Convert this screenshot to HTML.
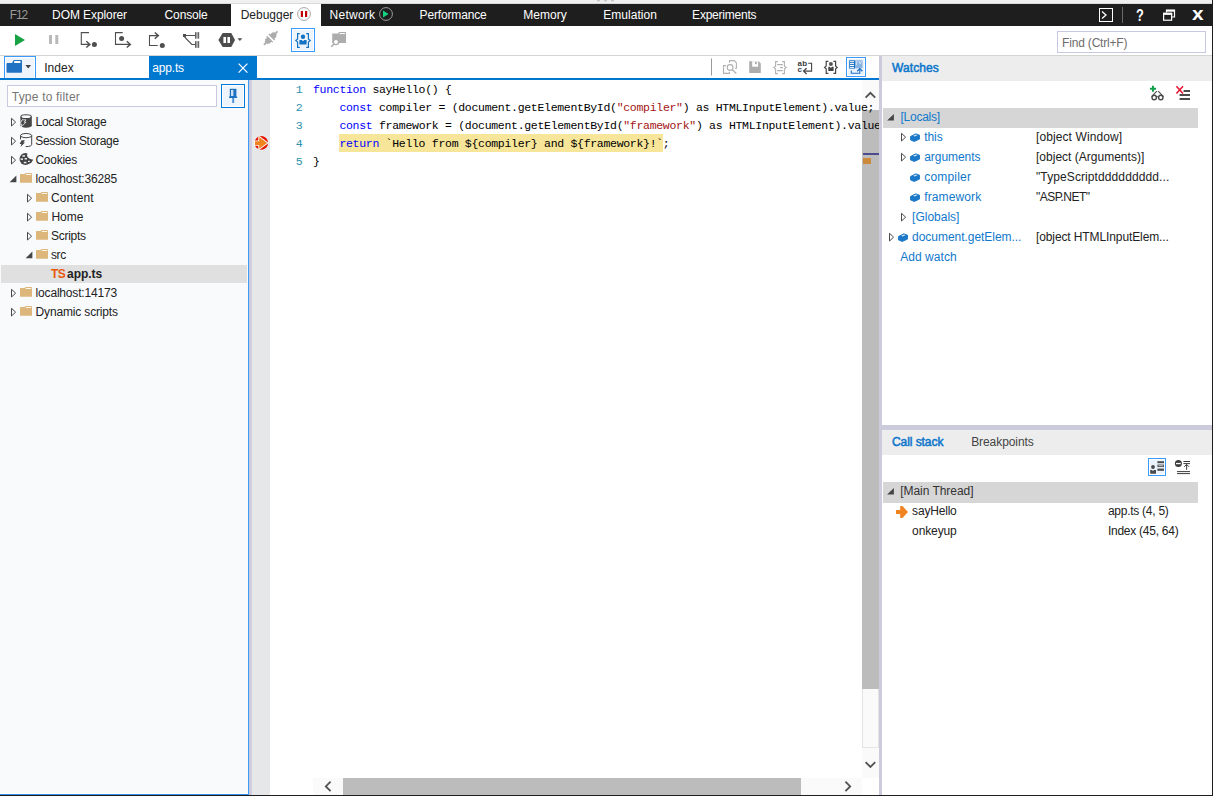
<!DOCTYPE html>
<html>
<head>
<meta charset="utf-8">
<title>F12 Debugger</title>
<style>
*{box-sizing:border-box;margin:0;padding:0}
html,body{width:1215px;height:796px;overflow:hidden;background:#fff}
body{position:relative;font-family:"Liberation Sans",sans-serif;font-size:12px;color:#222}
.a{position:absolute}
.t{position:absolute;white-space:pre;line-height:19px;height:19px}
svg{position:absolute;overflow:visible}
/* top bar */
#strip{left:0;top:0;width:1212px;height:4px;background:#f0f0f0;border-bottom:1px solid #d9d9d9}
#bar{left:0;top:4px;width:1212px;height:22px;background:#1e1e1e}
#bar .t{color:#fff;top:1px;line-height:20px;height:20px}
#dbgtab{left:231px;top:4px;width:90px;height:22px;background:#fff}
#rborder{left:1212px;top:0;width:1px;height:796px;background:#1e1e1e}
#bborder{left:0;top:795px;width:1213px;height:1px;background:#1e1e1e}
/* toolbar */
#tbline{left:0;top:55px;width:1212px;height:1px;background:#d4d4d4}
#find{left:1057px;top:31px;width:149px;height:22px;border:1px solid #c6c9df;background:#fff}
/* tab row */
#blueline{left:0;top:78px;width:879px;height:2px;background:#0078d0;z-index:1}
#foldbtn{left:4px;top:56px;width:32px;height:24px;border:1px solid #3a9bfc;background:#eef4fb;box-shadow:inset 0 0 0 1px #fff}
#apptab{left:149px;top:56px;width:108px;height:22px;background:#0078d0}
/* left panel */
#left{left:0;top:80px;width:248px;height:714px;background:#f9fafc}
#leftr{left:248px;top:80px;width:1px;height:715px;background:#3d9cfb}
#leftb{left:0;top:794px;width:249px;height:1px;background:#2f8fee}
#leftw{left:0;top:793px;width:248px;height:1px;background:#fff}
#filter{left:7px;top:85px;width:210px;height:22px;border:1px solid #c8c9dc;background:#fff}
#pin{left:221px;top:84px;width:24px;height:24px;border:1px solid #0078d7;background:#eef4fc;box-shadow:inset 0 0 0 1px #fff}
#sel{left:1px;top:264.5px;width:246px;height:18px;background:#e0e0e0}
/* editor */
#split1{left:249px;top:80px;width:3px;height:715px;background:linear-gradient(90deg,#c6c6da,#d3d3e0)}
#gutter{left:252px;top:80px;width:18px;height:715px;background:#e6e7e8}
#code{left:270px;top:80px;width:609px;height:715px;overflow:hidden;background:#fff}
.ln{position:absolute;left:0;width:32.4px;text-align:right;color:#2b91af;font-family:"Liberation Mono",monospace;font-size:11.5px;letter-spacing:-0.3px;line-height:18px;height:18px;white-space:pre}
.cl{position:absolute;left:43px;color:#000;font-family:"Liberation Mono",monospace;font-size:11.5px;letter-spacing:-0.3px;line-height:18px;height:18px;white-space:pre}

.k{color:#0000ff}.s{color:#a31515}
#hl{left:69px;top:54px;width:324px;height:17.5px;background:#f7e599}
/* scrollbars */
#vsb{left:592px;top:0;width:17px;height:698px;background:#fafafa}
#vth{left:592px;top:30px;width:17px;height:579px;background:#bcbcbc}
#vtr{left:592px;top:609px;width:17px;height:59px;background:#fafafa;border:1px solid #e4e4e4;border-top:0}
#hsb{left:313px;top:778px;width:549px;height:17px;background:#fafafa}
#hth{left:343px;top:778px;width:458px;height:17px;background:#bcbcbc}
#split2{left:879px;top:56px;width:3px;height:739px;background:#cbcbdc}
/* right panel */
#right{left:882px;top:56px;width:330px;height:739px;background:#fff}
.hdr{position:absolute;left:882px;width:330px;height:24.5px;background:#ededed}
#hsplit{left:882px;top:425px;width:330px;height:5px;background:#cbcbdc}
.rowbg{position:absolute;left:883.3px;width:314.7px;height:20px;background:#d6d6d6}
.r{position:absolute;white-space:pre;line-height:20px;height:20px}
.b{color:#1680d3}
</style>
</head>
<body>
<div class="a" id="strip"></div>
<div class="a" id="bar">
  <div class="a" id="dbgtab" style="left:231px;top:0"></div>
</div>
<div class="a" id="rborder"></div>
<div class="a" id="tbline"></div>
<div class="a" id="find"></div>
<div class="a" id="right"></div>
<div class="a" id="blueline"></div>
<div class="a" id="foldbtn"></div>
<div class="a" id="apptab"></div>
<div class="a" id="left"></div>
<div class="a" id="leftw"></div>
<div class="a" id="leftb"></div>
<div class="a" id="leftr"></div>
<div class="a" id="filter"></div>
<div class="a" id="pin"></div>
<div class="a" id="sel"></div>
<div class="a" id="split1"></div>
<div class="a" id="gutter"></div>
<div class="a" id="code">
  <div class="a" id="vsb"></div><div class="a" id="vth"></div><div class="a" id="vtr"></div>
  <div class="a" id="hl"></div>
  <div class="ln" style="top:1px">1</div><div class="cl" style="top:1px"><span class="k">function</span> sayHello() {</div>
  <div class="ln" style="top:19px">2</div><div class="cl" style="top:19px">    <span class="k">const</span> compiler = (document.getElementById(<span class="s">"compiler"</span>) <span class="k2">as</span> HTMLInputElement).value;</div>
  <div class="ln" style="top:37px">3</div><div class="cl" style="top:37px">    <span class="k">const</span> framework = (document.getElementById(<span class="s">"framework"</span>) <span class="k2">as</span> HTMLInputElement).value;</div>
  <div class="ln" style="top:55px">4</div><div class="cl" style="top:55px">    <span class="k">return</span> `Hello from ${compiler} and ${framework}!`;</div>
  <div class="ln" style="top:73px">5</div><div class="cl" style="top:73px">}</div>
</div>
<div class="a" id="hsb"></div>
<div class="a" id="hth"></div>
<div class="a" id="split2"></div>
<div class="hdr" style="top:56px"></div>
<div class="a" id="hsplit"></div>
<div class="hdr" style="top:430px"></div>
<div class="rowbg" style="top:108px"></div>
<div class="rowbg" style="top:482.3px;height:20.5px"></div>
<div class="a" id="bborder"></div>
<!--TEXT-->
<div class="r" style="left:9.8px;top:5px;color:#9a9a9a;letter-spacing:-1.20px">F12</div>
<div class="r" style="left:52.1px;top:5px;color:#fff;letter-spacing:-0.09px">DOM Explorer</div>
<div class="r" style="left:164.6px;top:5px;color:#fff;letter-spacing:-0.15px">Console</div>
<div class="r" style="left:240.7px;top:5px;color:#222;letter-spacing:-0.01px">Debugger</div>
<div class="r" style="left:329.6px;top:5px;color:#fff;letter-spacing:0.25px">Network</div>
<div class="r" style="left:419.6px;top:5px;color:#fff;letter-spacing:-0.16px">Performance</div>
<div class="r" style="left:523.3px;top:5px;color:#fff;letter-spacing:-0.00px">Memory</div>
<div class="r" style="left:603.3px;top:5px;color:#fff;letter-spacing:0.03px">Emulation</div>
<div class="r" style="left:692.1px;top:5px;color:#fff;letter-spacing:-0.22px">Experiments</div>
<div class="r" style="left:1062.1px;top:33px;color:#6d6d6d;letter-spacing:-0.19px">Find (Ctrl+F)</div>
<div class="r" style="left:44.2px;top:58px;color:#222;letter-spacing:0.07px">Index</div>
<div class="r" style="left:152.2px;top:58px;color:#fff;letter-spacing:-0.16px">app.ts</div>
<div class="r" style="left:11.8px;top:87px;color:#777;letter-spacing:0.20px">Type to filter</div>
<div class="r" style="left:35.6px;top:112px;color:#222;letter-spacing:-0.25px">Local Storage</div>
<div class="r" style="left:35.2px;top:131px;color:#222;letter-spacing:-0.29px">Session Storage</div>
<div class="r" style="left:35.4px;top:150px;color:#222;letter-spacing:-0.25px">Cookies</div>
<div class="r" style="left:35.6px;top:169px;color:#222;letter-spacing:-0.18px">localhost:36285</div>
<div class="r" style="left:51.0px;top:188px;color:#222;letter-spacing:0.10px">Content</div>
<div class="r" style="left:51.4px;top:207px;color:#222;letter-spacing:0.00px">Home</div>
<div class="r" style="left:51.0px;top:226px;color:#222;letter-spacing:-0.27px">Scripts</div>
<div class="r" style="left:51.0px;top:245px;color:#222;letter-spacing:-0.40px">src</div>
<div class="r" style="left:51.0px;top:264px;color:#e8590c;letter-spacing:-0.50px;font-weight:700">TS</div>
<div class="r" style="left:67.1px;top:264px;color:#222;letter-spacing:-0.04px;font-weight:700">app.ts</div>
<div class="r" style="left:35.6px;top:283px;color:#222;letter-spacing:-0.18px">localhost:14173</div>
<div class="r" style="left:35.6px;top:302px;color:#222;letter-spacing:-0.16px">Dynamic scripts</div>
<div class="r" style="left:892.1px;top:58px;color:#0c76cc;letter-spacing:0.08px;-webkit-text-stroke:0.5px">Watches</div>
<div class="r" style="left:900.5px;top:107px;color:#0f78cc;letter-spacing:-0.26px">[Locals]</div>
<div class="r" style="left:924.2px;top:127px;color:#0f78cc;letter-spacing:-0.07px">this</div>
<div class="r" style="left:924.2px;top:147px;color:#0f78cc;letter-spacing:-0.05px">arguments</div>
<div class="r" style="left:924.2px;top:167px;color:#0f78cc;letter-spacing:0.21px">compiler</div>
<div class="r" style="left:924.2px;top:187px;color:#0f78cc;letter-spacing:0.12px">framework</div>
<div class="r" style="left:912.1px;top:207px;color:#0f78cc;letter-spacing:0.00px">[Globals]</div>
<div class="r" style="left:912.1px;top:227px;color:#0f78cc;letter-spacing:-0.04px">document.getElem...</div>
<div class="r" style="left:900.2px;top:247px;color:#0f78cc;letter-spacing:0.05px">Add watch</div>
<div class="r" style="left:1036.0px;top:127px;color:#222;letter-spacing:0.10px">[object Window]</div>
<div class="r" style="left:1036.0px;top:147px;color:#222;letter-spacing:0.01px">[object (Arguments)]</div>
<div class="r" style="left:1036.0px;top:167px;color:#222;letter-spacing:0.10px">&quot;TypeScriptddddddddd...</div>
<div class="r" style="left:1036.0px;top:187px;color:#222;letter-spacing:-0.54px">&quot;ASP.NET&quot;</div>
<div class="r" style="left:1036.0px;top:227px;color:#222;letter-spacing:-0.11px">[object HTMLInputElem...</div>
<div class="r" style="left:892.0px;top:432px;color:#0c76cc;letter-spacing:-0.07px;-webkit-text-stroke:0.5px">Call stack</div>
<div class="r" style="left:971.2px;top:432px;color:#444;letter-spacing:-0.08px">Breakpoints</div>
<div class="r" style="left:900.2px;top:481px;color:#333;letter-spacing:-0.04px">[Main Thread]</div>
<div class="r" style="left:912.1px;top:501px;color:#222;letter-spacing:-0.19px">sayHello</div>
<div class="r" style="left:912.1px;top:521px;color:#222;letter-spacing:-0.12px">onkeyup</div>
<div class="r" style="left:1107.9px;top:501px;color:#222;letter-spacing:-0.26px">app.ts (4, 5)</div>
<div class="r" style="left:1107.9px;top:521px;color:#222;letter-spacing:-0.25px">Index (45, 64)</div>
<!--/TEXT-->
<!--ICONS-->
<svg class="a" style="left:0;top:0" width="1215" height="796" viewBox="0 0 1215 796">
<!-- top bar icons -->
<circle cx="304" cy="14" r="6.4" fill="#fff" stroke="#a4a4a4" stroke-width="1"/>
<rect x="300.8" y="11" width="2.2" height="6" fill="#c00000"/><rect x="305" y="11" width="2.2" height="6" fill="#c00000"/>
<circle cx="386" cy="14" r="6.4" fill="none" stroke="#9c9c9c" stroke-width="1"/>
<path d="M383,10.6 L388.6,14 L383,17.4Z" fill="#12d27f"/>
<!-- console icon -->
<rect x="1099.5" y="8.5" width="13" height="13" fill="none" stroke="#fff" stroke-width="1"/>
<path d="M1102,11.5 L1106,15 L1102,18.5" fill="none" stroke="#fff" stroke-width="1.3"/>
<rect x="1122" y="7" width="1" height="16" fill="#6a6a6a"/>
<!-- restore -->
<path d="M1166.5,12.5 V10 H1174.5 V17 H1172" fill="none" stroke="#fff" stroke-width="1.2"/>
<path d="M1166,10.8 H1175" stroke="#fff" stroke-width="1.8"/>
<rect x="1163.6" y="13.2" width="8" height="7" fill="none" stroke="#fff" stroke-width="1.2"/>
<path d="M1163,14 H1172.2" stroke="#fff" stroke-width="1.8"/>
<!-- close X -->
<text x="1192.1" y="19.8" font-family="Liberation Sans" font-weight="700" font-size="18.5" fill="#fff" textLength="11.6" lengthAdjust="spacingAndGlyphs">x</text>
<text x="1135.9" y="21" font-family="Liberation Sans" font-weight="700" font-size="16.4" fill="#fff" textLength="7.8" lengthAdjust="spacingAndGlyphs">?</text>
<!-- toolbar: play -->
<path d="M15,34 L25,40 L15,46Z" fill="#17a344"/>
<rect x="49" y="35" width="3" height="9" fill="#b9b9b9"/><rect x="55.3" y="35" width="3" height="9" fill="#b9b9b9"/>
<g fill="none" stroke="#4f4f4f" stroke-width="1.1">
<!-- step into -->
<path d="M89,32.6 H81.3 V44.4 H89.5"/><path d="M86.3,41.3 L89.8,44.4 L86.3,47.5" stroke-width="1.5"/>
<!-- step over -->
<path d="M122.7,32.6 H115.5 V44.4 H130"/><path d="M126.8,41.3 L130.3,44.4 L126.8,47.5" stroke-width="1.5"/>
<!-- step out -->
<path d="M157.7,45.5 H149.5 V35.6 H158"/><path d="M154.8,32.5 L158.3,35.6 L154.8,38.7" stroke-width="1.5"/>
<!-- break on worker -->
<path d="M186,35.5 H195.3 M184.6,37 L191.8,44.5 H195.3"/>
</g>
<circle cx="94.4" cy="44.4" r="2.5" fill="#4f4f4f"/>
<circle cx="121.6" cy="38.6" r="2.5" fill="#4f4f4f"/>
<circle cx="162.3" cy="45.5" r="2.5" fill="#4f4f4f"/>
<rect x="183" y="34" width="3" height="3" fill="#4f4f4f"/>
<rect x="195.2" y="32.2" width="3.8" height="6.4" fill="#aaa"/><rect x="195.2" y="41.2" width="3.8" height="6.6" fill="#aaa"/>
<path d="M195.6,32.2 V38.6 M198.7,32.2 V38.6 M195.6,41.2 V47.8 M198.7,41.2 V47.8" stroke="#4f4f4f" stroke-width="0.9"/>
<!-- hexagon pause -->
<path d="M218.4,39.9 L222.7,32.9 H231.3 L235,39.9 L231.3,46.9 H222.7Z" fill="#4d4d4d"/>
<rect x="223.4" y="37" width="2.6" height="6" fill="#fff"/><rect x="227.4" y="37" width="2.6" height="6" fill="#fff"/>
<path d="M237.5,38.2 H242.3 L239.9,41Z" fill="#4d4d4d"/>
<!-- plug disabled -->
<g fill="#adadad" transform="translate(270.7,38.1) rotate(-45)">
<path d="M0.8,-4.2 H2.2 V-3 H5.4 V-2 H6.8 V-0.9 H9.6 V0.9 H6.8 V2 H5.4 V3 H2.2 V4.2 H0.8Z"/>
<path d="M-0.8,-4.2 H-2.2 V-3 H-5.4 V-2 H-6.8 V-0.9 H-9.6 V0.9 H-6.8 V2 H-5.4 V3 H-2.2 V4.2 H-0.8Z"/>
</g>
</svg>
<svg class="a" style="left:0;top:0" width="1215" height="796" viewBox="0 0 1215 796">
<!-- selected just-my-code button -->
<rect x="291.5" y="28.5" width="23" height="23" fill="#eef4fb" stroke="#3a9bfc"/>
<rect x="292.5" y="29.5" width="21" height="21" fill="none" stroke="#fff"/>
<g fill="none" stroke="#1272c4" stroke-width="1.2">
<path d="M299.8,33.6 H297.6 V39 L295.8,40.5 L297.6,42 V47.4 H299.8"/>
<path d="M306.2,33.6 H308.4 V39 L310.2,40.5 L308.4,42 V47.4 H306.2"/>
</g>
<circle cx="303" cy="36.8" r="2.2" fill="#1272c4"/>
<path d="M299.4,40 H301.8 L303,41.2 L304.2,40 H306.6 V44.6 H299.4Z" fill="#1272c4"/>
<!-- folder search disabled -->
<path d="M332.2,33.6 H338 L339,32 H346 V43 H332.2Z" fill="#adadad"/>
<path d="M339.4,33.6 H345" stroke="#fff" stroke-width="1"/>
<circle cx="336" cy="42" r="2.6" fill="#fff" stroke="#adadad" stroke-width="1.3"/>
<path d="M334.2,43.8 L331.2,46.8" stroke="#adadad" stroke-width="1.6"/>
<!-- folder dropdown button icon -->
<path d="M6.5,63.9 Q6.5,63.1 7.3,63.1 H12.1 L13.3,60.6 Q13.6,59.9 14.4,59.9 H21.2 Q22,59.9 22,60.7 V71.9 Q22,72.7 21.2,72.7 H7.3 Q6.5,72.7 6.5,71.9Z" fill="#2272c3"/>
<rect x="14.1" y="61.1" width="6.5" height="1.8" rx="0.6" fill="#fff"/>
<path d="M25.4,64.9 H31.1 L28.25,68.4Z" fill="#444"/>
<!-- tab close -->
<path d="M238.6,63.6 L247.4,72.6 M247.4,63.6 L238.6,72.6" stroke="#fff" stroke-width="1.2"/>
<!-- tab row icons -->
<rect x="711" y="58.5" width="1" height="17" fill="#9a9a9a"/>
<g fill="none" stroke="#b0b0b0" stroke-width="1.1">
<path d="M729.5,62.8 V60.6 H734.2 L736.4,62.9 V68.2 H735"/>
<path d="M726,65.6 H723.5 V73.4 H729.4 V71.8"/>
<circle cx="730.1" cy="67.5" r="2.9"/>
<path d="M732.3,69.8 L736.3,73.5" stroke-width="1.3"/>
</g>
<!-- save disabled -->
<path d="M749.2,61.3 H758.6 L760.8,63.4 V73.1 H749.2Z" fill="#adadad"/>
<rect x="752.2" y="61.3" width="5.9" height="5.4" fill="#fff"/>
<rect x="755" y="61.8" width="1.8" height="2.4" fill="#adadad"/>
<!-- {=} disabled -->
<g fill="none" stroke="#b0b0b0" stroke-width="1.1">
<path d="M777.8,61.6 H775.6 V66.2 L773.8,67.6 L775.6,69 V73.6 H777.8"/>
<path d="M782.2,61.6 H784.4 V66.2 L786.2,67.6 L784.4,69 V73.6 H782.2"/>
<path d="M777.2,64.6 H782.8 M780,67.6 H782.8 M777.2,70.6 H782.8"/>
</g>
<!-- word wrap -->
<g fill="none" stroke="#444" stroke-width="1.1">
<path d="M808.2,63.3 H811.6 V71.1 H804"/>
<path d="M806.6,68.2 L803.6,71.1 L806.6,74" stroke-width="1.3"/>
</g>
<text x="797.5" y="65.9" font-family="Liberation Sans" font-size="8" font-weight="700" fill="#3c3c3c" letter-spacing="0.2">ab</text>
<text x="797.5" y="72.3" font-family="Liberation Sans" font-size="8" font-weight="700" fill="#3c3c3c">c</text>
<!-- {person} dark -->
<g fill="none" stroke="#444" stroke-width="1.2">
<path d="M828.4,61.4 H826.2 V66 L824.6,67.4 L826.2,68.8 V73.4 H828.4"/>
<path d="M833.4,61.4 H835.6 V66 L837.2,67.4 L835.6,68.8 V73.4 H833.4"/>
</g>
<circle cx="830.9" cy="63.9" r="2" fill="#555"/>
<path d="M828.3,66.8 H829.8 L830.9,68 L832,66.8 H833.6 V71.1 H828.3Z" fill="#444"/>
<!-- selected source map button -->
<rect x="846.5" y="57.5" width="19" height="19" fill="#eaf2fc" stroke="#3a9bfc"/>
<rect x="847.5" y="58.5" width="17" height="17" fill="none" stroke="#fff"/>
<rect x="849.2" y="60.3" width="5.8" height="8.3" fill="#1b70c2"/>
<g fill="#fff"><rect x="850" y="61.2" width="4" height="1"/><rect x="850" y="63.1" width="4" height="1"/><rect x="850" y="65" width="4" height="1"/><rect x="850" y="66.9" width="4" height="1"/></g>
<rect x="855" y="60.3" width="7.6" height="8" fill="#8ab5e2"/>
<path d="M856.6,61 V65 M858.8,61 L860.2,64 L861.6,61" stroke="#d8e6f6" stroke-width="0.9" fill="none"/>
<g fill="none" stroke="#1b70c2" stroke-width="1.1">
<path d="M851.3,70.6 V73.2 H859.8 V68.8"/>
<path d="M857.2,71.2 L859.8,68.6 L862.4,71.2" stroke-width="1.3"/>
</g>
<!-- pin -->
<rect x="230.4" y="89.4" width="5.4" height="7.2" fill="#cfe0f3" stroke="#1b70c2" stroke-width="1.2"/>
<rect x="233.4" y="89.4" width="2.4" height="7.2" fill="#1b70c2"/>
<rect x="229" y="96.6" width="8.2" height="1.4" fill="#1b70c2"/>
<rect x="232.2" y="98" width="2" height="5" fill="#4f93d6"/>
</svg>
<svg class="a" style="left:0;top:0" width="1215" height="796" viewBox="0 0 1215 796">
<defs>
<path id="tc" d="M0.5,0.3 V8 L4.6,4.15Z" fill="none" stroke="#4a4a4a" stroke-width="1"/>
<path id="te" d="M6.4,-0.4 V6.2 H-0.4Z" fill="#454545"/>
<g id="fold"><path d="M0,1.6 Q0,1 0.6,1 H4.6 L5.6,0 H11.3 Q12,0 12,0.7 V9.2 Q12,9.8 11.4,9.8 H0.6 Q0,9.8 0,9.2Z" fill="#dcb67a"/><path d="M5.8,1.5 H11.2" stroke="#fdf8ee" stroke-width="1"/></g>
<g id="cube"><path d="M0.5,3.2 L5.8,0.5 L9.5,1.9 V5.8 L4.3,8.2 L0.5,6.6Z" fill="#1b78c8" stroke="#1b78c8" stroke-width="0.9" stroke-linejoin="round"/><path d="M3.3,2.5 L6.1,1.1 L7.5,1.6 L4.6,3.1Z" fill="#e4f0fa"/></g>
</defs>
<!-- tree expanders -->
<use href="#tc" x="11" y="118"/><use href="#tc" x="11" y="137"/><use href="#tc" x="11" y="156"/>
<use href="#te" x="10" y="176"/>
<use href="#tc" x="27" y="194"/><use href="#tc" x="27" y="213"/><use href="#tc" x="27" y="232"/>
<use href="#te" x="26" y="252"/>
<use href="#tc" x="11" y="289"/><use href="#tc" x="11" y="308"/>
<!-- folders -->
<use href="#fold" x="20" y="173"/>
<use href="#fold" x="36" y="192"/><use href="#fold" x="36" y="211"/><use href="#fold" x="36" y="230"/><use href="#fold" x="36" y="249"/>
<use href="#fold" x="20" y="287"/><use href="#fold" x="20" y="306"/>
<!-- local storage -->
<path d="M20.4,116.8 V125.4 A5.7,2.3 0 0 0 31.8,125.4 V116.8Z" fill="#454545"/>
<ellipse cx="26.1" cy="116.7" rx="5.2" ry="1.9" fill="#f9fafc" stroke="#454545" stroke-width="1.1"/>
<path d="M22,119.8 H26 L24.2,122.2 H26 L20.6,127.6 L21.8,124.2 H19.8Z" fill="#454545" stroke="#f9fafc" stroke-width="0.8"/>
<!-- session storage -->
<path d="M20.5,135.6 V139.4 M25.6,146.6 Q31.7,146.6 31.7,144.4 V135.6" fill="none" stroke="#454545" stroke-width="1"/>
<ellipse cx="26.1" cy="135.6" rx="5.6" ry="2.1" fill="none" stroke="#454545" stroke-width="1"/>
<path d="M21.6,140.2 H25 L23.4,142.4 H25 L20.4,147 L21.4,144 H19.6Z" fill="#454545"/>
<!-- cookie -->
<circle cx="25.4" cy="159" r="5.9" fill="#454545"/>
<path d="M29,163.6 Q32.4,162.4 32.8,159.2 Q31,161.2 28.4,160.6Z" fill="#454545"/>
<circle cx="30.8" cy="155.2" r="3.7" fill="#f9fafc"/>
<path d="M28.2,153 Q26.6,156.4 29.6,158.8 Q31.4,160 32.8,159.2 Q32.6,162 30,163.6 L27,160Z" fill="#454545"/>
<circle cx="31.2" cy="155" r="3.5" fill="#f9fafc"/>
<g fill="#ededed"><rect x="22.4" y="155.2" width="2.6" height="1.5"/><rect x="20.6" y="158.4" width="2.4" height="1.5"/><rect x="24.6" y="158" width="2.4" height="1.5"/><rect x="23.8" y="161.8" width="2.6" height="1.5"/><rect x="28" y="160.8" width="1.8" height="1.2"/></g>
<!-- breakpoint -->
<circle cx="261.3" cy="142.9" r="7.3" fill="#eef3f3"/>
<circle cx="261.3" cy="142.9" r="6.8" fill="#e51400"/>
<path d="M255,141.3 H259.2 V137.1 L267.2,142.9 L259.2,148.7 V144.9 H255Z" fill="#fff" stroke="#fff" stroke-width="1.8" stroke-linejoin="round"/>
<path d="M255,141.3 H259.2 V137.1 L267.2,142.9 L259.2,148.7 V144.9 H255Z" fill="#f0841f"/>
<!-- scrollbar arrows -->
<g fill="none" stroke="#505050" stroke-width="1.8">
<path d="M865.6,97.6 L870.4,92.8 L875.2,97.6"/>
<path d="M865.6,762.2 L870.4,767 L875.2,762.2"/>
<path d="M330.6,781.6 L325.8,786.4 L330.6,791.2"/>
<path d="M845.4,781.6 L850.2,786.4 L845.4,791.2"/>
</g>
<!-- scrollbar markers -->
<rect x="863" y="153" width="16" height="2" fill="#4b4b8e"/>
<rect x="863" y="158" width="8" height="6" fill="#cd8a3c"/>
<!-- watches toolbar -->
<path d="M1150,88.8 H1156 M1153,85.8 V91.8" stroke="#12a04a" stroke-width="2"/>
<g fill="none" stroke="#4a4a4a" stroke-width="1.1">
<circle cx="1154.2" cy="97.5" r="2.2" stroke-width="1.4"/><circle cx="1160.8" cy="97.5" r="2.2" stroke-width="1.4"/>
<path d="M1156.5,96.8 H1158.5 M1156.8,91.2 L1151.6,96.6 M1158.2,91.2 L1163.4,96.6"/>
</g>
<path d="M1176.4,86.2 L1183,93.4 M1183,86.2 L1176.4,93.4" stroke="#e8112d" stroke-width="1.5"/>
<path d="M1183.6,91 H1190 M1179.6,95 H1190 M1179.6,99 H1190" stroke="#4a4a4a" stroke-width="2"/>
<!-- watch expanders & cubes -->
<use href="#te" x="887.5" y="114.3"/>
<use href="#tc" x="901" y="133"/><use href="#tc" x="901" y="153"/><use href="#tc" x="901" y="213"/><use href="#tc" x="889" y="233"/>
<use href="#cube" x="910" y="133.3"/><use href="#cube" x="910" y="153.3"/><use href="#cube" x="910" y="173.3"/><use href="#cube" x="910" y="193.3"/><use href="#cube" x="898" y="233.3"/>
<!-- call stack toolbar -->
<rect x="1148.5" y="458.5" width="17" height="17" fill="#eaf3fc" stroke="#3a9bfc"/>
<rect x="1149.5" y="459.5" width="15" height="15" fill="none" stroke="#fff"/>
<circle cx="1153" cy="467" r="1.9" fill="#4a4a4a"/>
<path d="M1150.2,470 H1152 L1153,471 L1154,470 H1156 V473.8 H1150.2Z" fill="#4a4a4a"/>
<rect x="1157.4" y="461.2" width="6.6" height="2" fill="#4a4a4a"/>
<rect x="1157.9" y="465" width="5.6" height="1.6" fill="#fff" stroke="#4a4a4a" stroke-width="0.9"/>
<rect x="1157.4" y="468.6" width="6.6" height="2.2" fill="#4a4a4a"/>
<circle cx="1178.4" cy="463.5" r="3.5" fill="#3c3c3c"/>
<rect x="1176" y="462.9" width="4.8" height="1.3" fill="#fff"/>
<g fill="none" stroke="#3c3c3c" stroke-width="1">
<path d="M1183.4,461.5 H1190 M1183.4,463.6 H1190 M1186.6,464.4 V469.8 M1184.2,466.8 L1186.6,464.4 L1189,466.8 M1177,471.6 H1190 M1177,473.6 H1190"/>
</g>
<!-- call stack -->
<use href="#te" x="887.5" y="488.3"/>
<path d="M896,509.9 H900.2 V506.1 H902.4 L908,512 L902.4,517.9 H900.2 V513.9 H896Z" fill="#f08420"/>
<rect x="597" y="0" width="3" height="1.3" fill="#c6c6c6"/><rect x="604" y="0" width="3" height="1.3" fill="#c6c6c6"/><rect x="611" y="0" width="3" height="1.3" fill="#c6c6c6"/>
</svg>
<!--/ICONS-->
</body>
</html>
